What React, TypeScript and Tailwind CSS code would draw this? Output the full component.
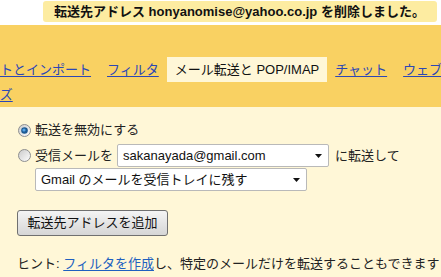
import React from "react";

const font = { fontFamily: '"Liberation Sans", "Noto Sans CJK JP", sans-serif' };

const Radio: React.FC<{ checked?: boolean }> = ({ checked }) => (
  <svg width="13" height="13" viewBox="0 0 13 13" className="shrink-0">
    <defs>
      <linearGradient id={checked ? "rg1" : "rg2"} x1="0" y1="0" x2="1" y2="1">
        <stop offset="0" stopColor="#c9c9c9" />
        <stop offset="1" stopColor="#ffffff" />
      </linearGradient>
    </defs>
    <circle cx="6.5" cy="6.5" r="6" fill={`url(#${checked ? "rg1" : "rg2"})`} stroke="#8e8f8f" strokeWidth="1" />
    {checked && (
      <>
        <circle cx="6.5" cy="6.5" r="3.3" fill="#1d5a93" />
        <circle cx="6" cy="6" r="1.6" fill="#55a5e6" />
      </>
    )}
  </svg>
);

const Arrow = () => (
  <svg width="7" height="4" viewBox="0 0 7 4" className="shrink-0">
    <path d="M0 0h7L3.5 4z" fill="#111" />
  </svg>
);

const Select: React.FC<{ value: string; className: string }> = ({ value, className }) => (
  <div
    className={`flex h-[23px] items-center justify-between rounded-[2px] border border-[#b9b9b9] bg-white pl-[5px] pr-[6px] text-[13px] text-[#111] ${className}`}
  >
    <span>{value}</span>
    <Arrow />
  </div>
);

const tabLink = "px-2 text-[#2c47b5] underline underline-offset-2";

export default function App() {
  return (
    <div className="h-[277px] w-[441px] overflow-hidden bg-white text-[#222]" style={font}>
      {/* notice */}
      <div className="h-[25px] pt-px">
        <div className="ml-[43px] flex h-[21px] w-[394px] items-center rounded-[3px] bg-[#fdeca1] pl-[11px] text-[13px] font-bold text-[#111]">
          転送先アドレス honyanomise@yahoo.co.jp を削除しました。
        </div>
      </div>

      {/* tabs */}
      <div className="overflow-hidden bg-[#f9d162] pt-[32px]">
        <div className="ml-[-60px] flex w-[570px] flex-wrap text-[13px] leading-[25px]">
          <span className={tabLink}>アカウントとインポート</span>
          <span className={tabLink}>フィルタ</span>
          <span className="bg-[#fff7d7] px-2 text-[#111]">メール転送と POP/IMAP</span>
          <span className={tabLink}>チャット</span>
          <span className={tabLink}>ウェブクリップ</span>
          <span className={tabLink}>アドオンズ</span>
        </div>
      </div>

      {/* content */}
      <div className="h-[170px] bg-[#fff7d7] pl-[17px] pt-[12px] text-[13px]">
        <div className="flex h-[22px] items-center gap-1 pl-px">
          <Radio checked />
          <span>転送を無効にする</span>
        </div>
        <div className="mt-[3px] flex h-[23px] items-center pl-px">
          <Radio />
          <span className="ml-1">受信メールを</span>
          <Select value="sakanayada@gmail.com" className="ml-1 w-[212px]" />
          <span className="ml-[6px]">に転送して</span>
        </div>
        <div className="mt-px">
          <Select value="Gmail のメールを受信トレイに残す" className="ml-[18px] w-[272px]" />
        </div>
        <div className="mt-[19px]">
          <button className="h-[26px] w-[151px] rounded-[3px] border border-[#707070] bg-gradient-to-b from-[#f4f4f4] to-[#d6d6d6] text-[13px] text-[#111]">
            転送先アドレスを追加
          </button>
        </div>
        <div className="mt-[18px] whitespace-nowrap leading-[20px]">
          ヒント: <span className="text-[#2060c0] underline underline-offset-2">フィルタを作成</span>し、特定のメールだけを転送することもできます
        </div>
      </div>
    </div>
  );
}
